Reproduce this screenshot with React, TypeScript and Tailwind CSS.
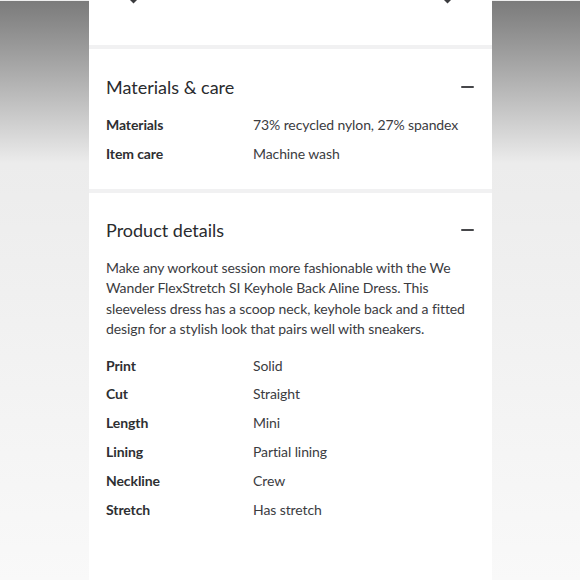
const MATERIALS = [
  { label: 'Materials', value: '73% recycled nylon, 27% spandex' },
  { label: 'Item care', value: 'Machine wash' },
];

const DETAILS = [
  { label: 'Print', value: 'Solid' },
  { label: 'Cut', value: 'Straight' },
  { label: 'Length', value: 'Mini' },
  { label: 'Lining', value: 'Partial lining' },
  { label: 'Neckline', value: 'Crew' },
  { label: 'Stretch', value: 'Has stretch' },
];

function Minus() {
  return <div className="w-[13px] h-[2px] bg-[#46474a] rounded-full" />;
}

function ChevronTip() {
  return (
    <svg width="7" height="4" viewBox="0 0 7 4" className="block">
      <path d="M0 0 L3.5 3.5 L7 0 Z" fill="#3a3b3e" />
    </svg>
  );
}

function Rows({ rows }: { rows: { label: string; value: string }[] }) {
  return (
    <div className="flex flex-col">
      {rows.map((r) => (
        <div key={r.label} className="flex leading-[28.8px] text-[14px] tracking-[-0.1px]">
          <div className="w-[147px] font-bold text-[#2e2f32]">{r.label}</div>
          <div className="text-[#3b3c3f]">{r.value}</div>
        </div>
      ))}
    </div>
  );
}

function SectionHeader({ title }: { title: string }) {
  return (
    <div className="flex items-center justify-between leading-[24px]">
      <h2 className="text-[18px] text-[#2a2b2e]">{title}</h2>
      <Minus />
    </div>
  );
}

export default function App() {
  return (
    <div
      className="w-[580px] h-[580px] flex overflow-hidden bg-white"
      style={{ fontFamily: 'Lato, "Open Sans", sans-serif' }}
    >
      {/* blurred backdrop, left */}
      <div className="w-[89px] shrink-0 border-t border-[#eeeeee] bg-gradient-to-b from-[#7b7b7b] via-[#ececec] via-[28%] to-[#f9f9f9]" />

      {/* product panel */}
      <div className="w-[403px] shrink-0 flex flex-col bg-white">
        <div className="h-[45px] flex justify-between px-[41px]">
          <ChevronTip />
          <ChevronTip />
        </div>
        <div className="h-[4px] bg-[#f1f1f2]" />

        <section className="pl-[17px] pr-[18px] pt-[26px] pb-[20px]">
          <SectionHeader title="Materials & care" />
          <div className="mt-[12px]">
            <Rows rows={MATERIALS} />
          </div>
        </section>

        <div className="h-[4px] bg-[#f1f1f2]" />

        <section className="pl-[17px] pr-[18px] pt-[25px]">
          <SectionHeader title="Product details" />
          <p className="mt-[16px] text-[14px] tracking-[-0.1px] leading-[20.5px] text-[#3b3c3f]">
            Make any workout session more fashionable with the We Wander FlexStretch SI Keyhole Back Aline
            Dress. This sleeveless dress has a scoop neck, keyhole back and a fitted design for a stylish
            look that pairs well with sneakers.
          </p>
          <div className="mt-[12px]">
            <Rows rows={DETAILS} />
          </div>
        </section>
      </div>

      {/* blurred backdrop, right */}
      <div className="flex-1 border-t border-[#eeeeee] bg-gradient-to-b from-[#7b7b7b] via-[#ececec] via-[28%] to-[#f9f9f9]" />
    </div>
  );
}
